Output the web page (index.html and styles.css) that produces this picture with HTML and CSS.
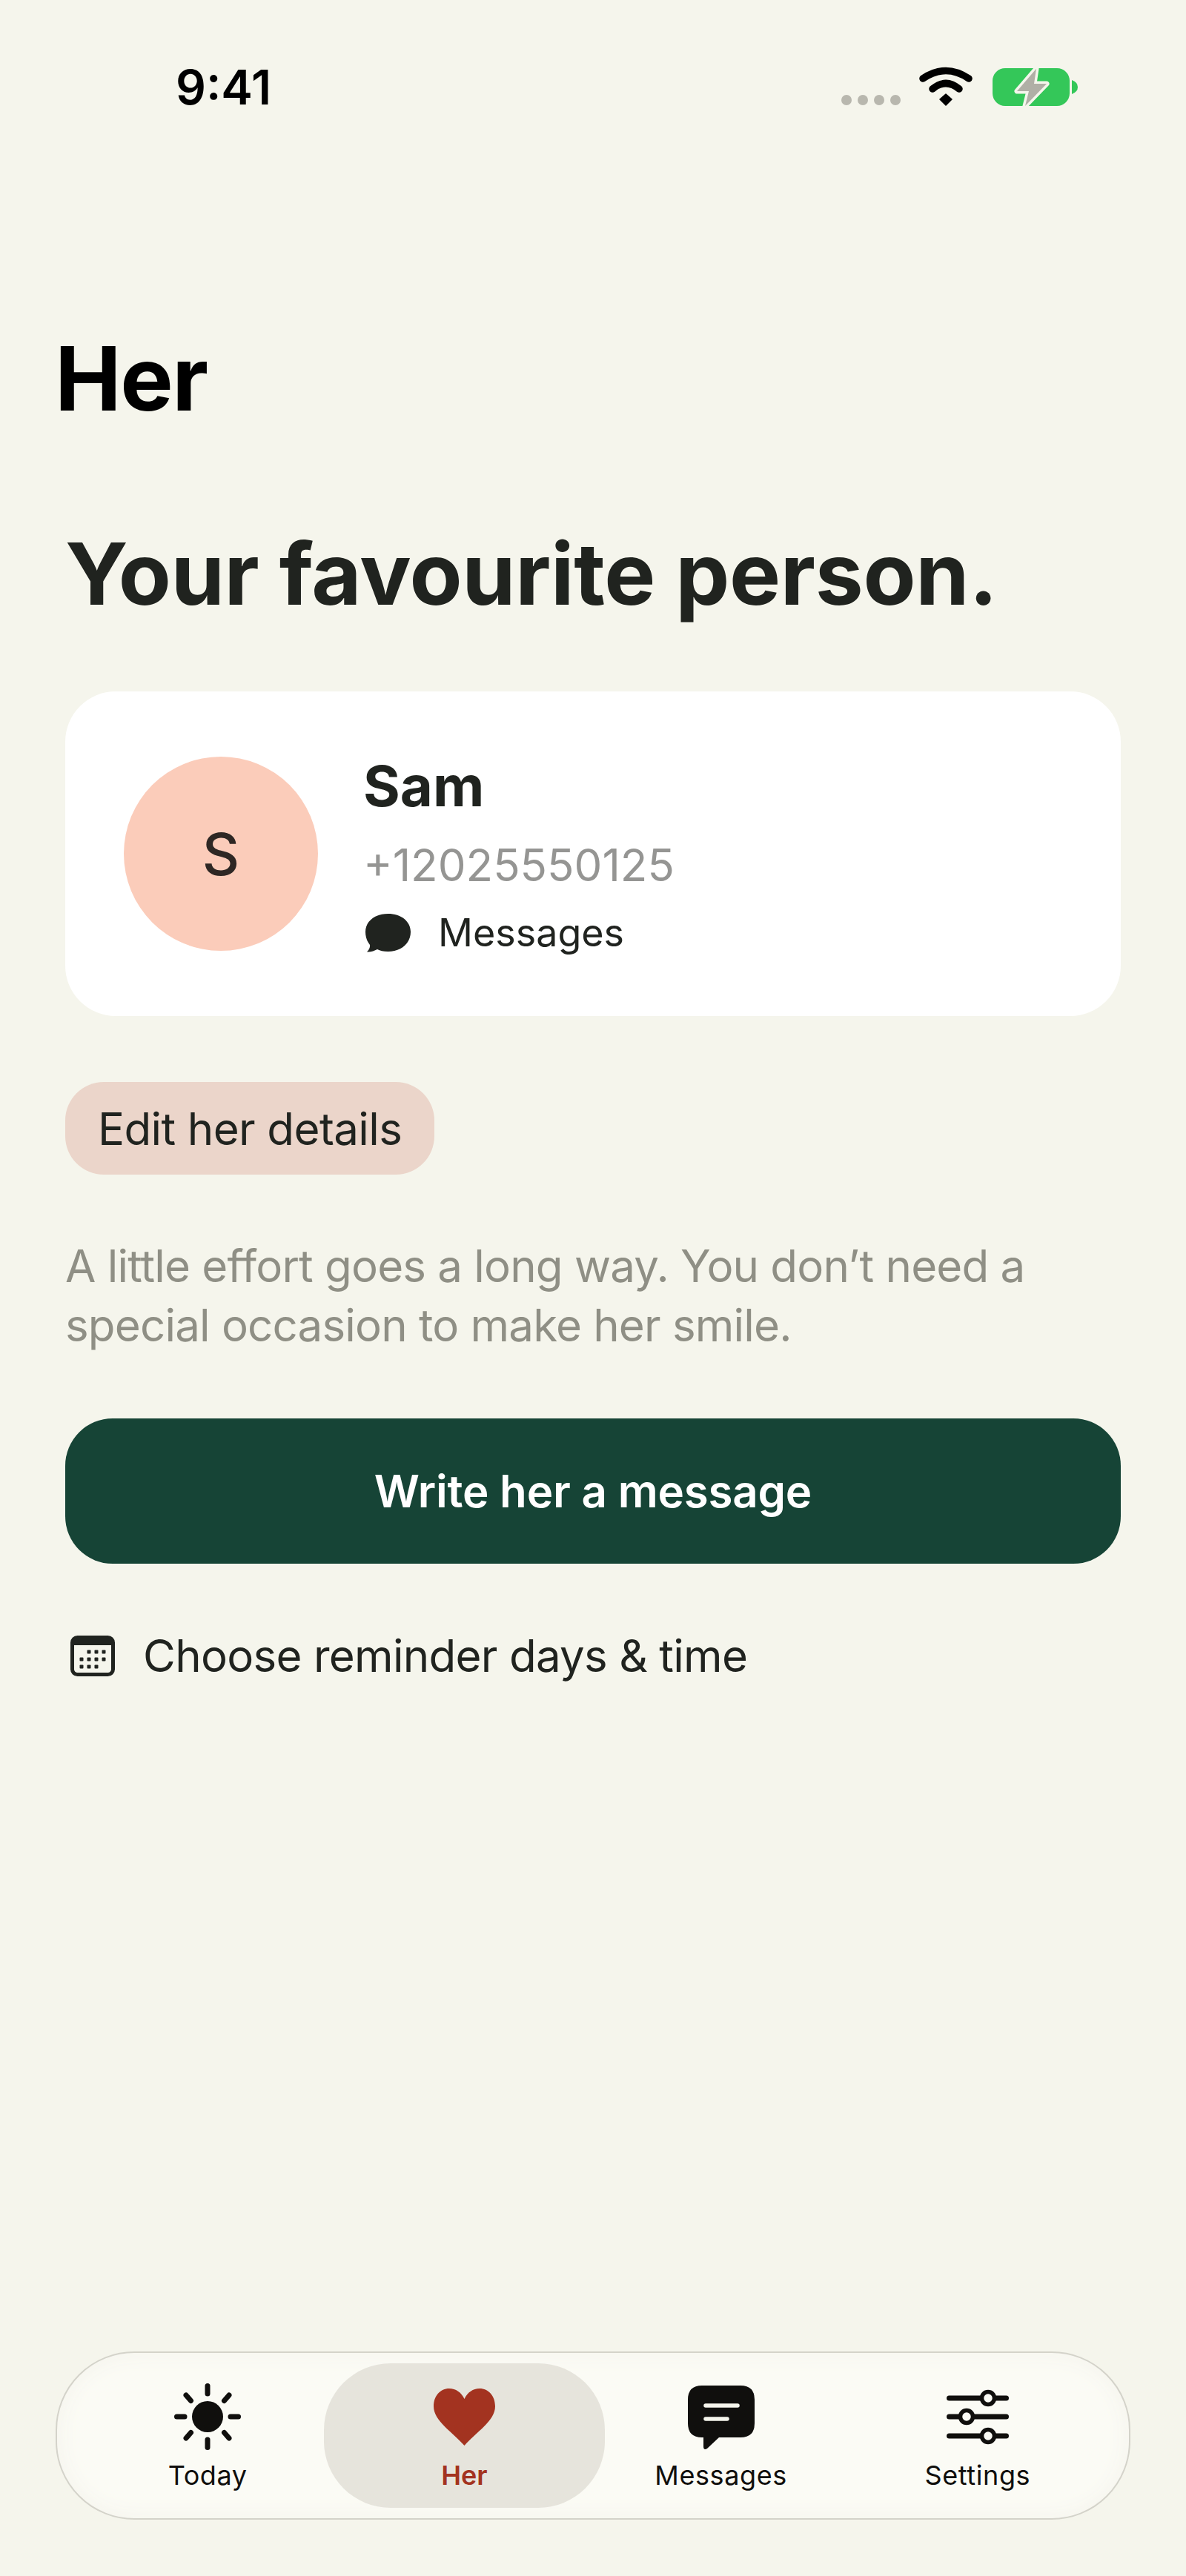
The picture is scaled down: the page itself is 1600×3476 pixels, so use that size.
FILE: index.html
```html
<!DOCTYPE html>
<html lang="en">
  <head>
    <meta charset="UTF-8" />
    <meta name="viewport" content="width=device-width, initial-scale=1.0" />
    <title>Her</title>
    <link rel="stylesheet" href="styles.css">
  </head>
  <body>
    <div class="status-bar">
      <span class="time">9:41</span>
      <svg class="status-icons" width="319" height="54" viewBox="0 0 319 54">
        <circle cx="7" cy="46" r="7" fill="#b8b7ae" />
        <circle cx="29" cy="46" r="7" fill="#b8b7ae" />
        <circle cx="51" cy="46" r="7" fill="#b8b7ae" />
        <circle cx="73" cy="46" r="7" fill="#b8b7ae" />
        <path d="M110 17 Q141 -4 172 17" fill="none" stroke="#000" stroke-width="9.5" stroke-linecap="round" />
        <path d="M123 31 Q141 16 159 31" fill="none" stroke="#000" stroke-width="9.5" stroke-linecap="round" />
        <path d="M133 45 L141 38 L149 45 L141 53 Z" stroke="#000" stroke-width="1.5" stroke-linejoin="round" />
        <rect x="204" y="3" width="104" height="51" rx="17" fill="#34c759" />
        <path d="M311 19 Q319 22 319 28.5 Q319 35 311 38 Z" fill="#34c759" />
        <path d="M263 3.7 L237 34 L253 34 L248 54 L277 24 L260 24 Z" fill="#b0afa6" stroke="#f5f5ec" stroke-width="7" stroke-linejoin="round" paint-order="stroke" />
      </svg>
    </div>

    <h1 class="page-title">Her</h1>

    <main class="content">
      <h2 class="headline">Your favourite person.</h2>

      <div class="person-card">
        <div class="avatar">S</div>
        <div class="person-info">
          <div class="person-name">Sam</div>
          <div class="person-phone">+12025550125</div>
          <div class="person-channel">
            <svg width="61" height="52" viewBox="0 0 61 52">
              <path d="M30.5 0 C48 0 61 10 61 24.5 C61 40 48 51 30.5 51 C24 51 20 50 16 48 C12 50 7 52 2 51.5 C5 48.5 6.500 45 6 42 C2 37 0 31 0 24.500 C0 10 13 0 30.500 0 Z" fill="#20231f" />
            </svg>
            <span>Messages</span>
          </div>
        </div>
      </div>

      <button class="edit-btn">Edit her details</button>

      <p class="blurb">A little effort goes a long way. You don’t need a special occasion to make her smile.</p>

      <button class="write-btn">Write her a message</button>

      <div class="reminder">
        <svg width="60" height="55" viewBox="0 0 60 55">
          <rect x="2.500" y="2.500" width="55" height="50" rx="7" fill="#f5f5ec" stroke="#20231f" stroke-width="5" />
          <path d="M2 13 V9 Q2 2 9 2 H51 Q58 2 58 9 V13 Z" fill="#20231f" />
          <g fill="#20231f">
            <rect x="22.500" y="19.500" width="5" height="5" rx="1" />
            <rect x="32.500" y="19.500" width="5" height="5" rx="1" />
            <rect x="42.500" y="19.500" width="5" height="5" rx="1" />
            <rect x="12.500" y="29.500" width="5" height="5" rx="1" />
            <rect x="22.500" y="29.500" width="5" height="5" rx="1" />
            <rect x="32.500" y="29.500" width="5" height="5" rx="1" />
            <rect x="42.500" y="29.500" width="5" height="5" rx="1" />
            <rect x="12.500" y="39.500" width="5" height="5" rx="1" />
            <rect x="22.500" y="39.500" width="5" height="5" rx="1" />
            <rect x="32.500" y="39.500" width="5" height="5" rx="1" />
          </g>
        </svg>
        <span>Choose reminder days &amp; time</span>
      </div>
    </main>

    <nav class="tab-bar">
      <div class="tab">
        <svg width="92" height="92" viewBox="0 0 92 92">
          <circle cx="46" cy="46" r="21" fill="#100f0d" />
          <g stroke="#100f0d" stroke-width="7" stroke-linecap="round">
            <path d="M46 4.500 V15" />
            <path d="M46 77 V87.500" />
            <path d="M4.500 46 H15" />
            <path d="M77 46 H87.500" />
            <path d="M17 17 L23.500 24.500" />
            <path d="M75 17 L68.500 24.500" />
            <path d="M17 75 L23.500 67.500" />
            <path d="M75 75 L68.500 67.500" />
          </g>
        </svg>
        <span>Today</span>
      </div>
      <div class="tab tab-active">
        <svg width="83" height="92" viewBox="0 -8 83 92">
          <path d="M41.500 77 C26 59 0 44 0 24 C0 10 9 0 21 0 C30 0 37 5 41.500 14 C46 5 53 0 62 0 C74 0 83 10 83 24 C83 44 57 59 41.500 77 Z" fill="#a33320" />
        </svg>
        <span>Her</span>
      </div>
      <div class="tab">
        <svg width="92" height="92" viewBox="0 0 92 92">
          <path d="M20 4 H72 Q91 4 91 23 V55 Q91 74 72 74 H43 L27 89 Q22 92 22 86 V74 H20 Q1 74 1 55 V23 Q1 4 20 4 Z" fill="#100f0d" />
          <path d="M25 31 H68" stroke="#f5f5ec" stroke-width="5.500" stroke-linecap="round" />
          <path d="M25 49 H54" stroke="#f5f5ec" stroke-width="5.500" stroke-linecap="round" />
        </svg>
        <span>Messages</span>
      </div>
      <div class="tab">
        <svg width="92" height="92" viewBox="0 0 92 92">
          <g stroke="#100f0d" stroke-width="7" stroke-linecap="round">
            <path d="M7.500 21 H84.500" />
            <path d="M7.500 46 H84.500" />
            <path d="M7.500 72 H84.500" />
          </g>
          <g fill="#fbfbf5" stroke="#100f0d" stroke-width="5.500">
            <circle cx="60" cy="21" r="8.500" />
            <circle cx="31" cy="46" r="8.500" />
            <circle cx="60" cy="72" r="8.500" />
          </g>
        </svg>
        <span>Settings</span>
      </div>
    </nav>
  </body>
</html>
```

FILE: styles.css
```css
* {
  box-sizing: border-box;
}
body {
  margin: 0;
  min-height: 3476px;
  display: flex;
  flex-direction: column;
  background-color: #f5f5ec;
  font-family: Inter, "Liberation Sans", sans-serif;
  color: #20231f;
}
.status-bar {
  display: flex;
  justify-content: space-between;
  align-items: flex-start;
  padding: 89px 146px 0 237px;
}
.time {
  font-size: 64px;
  font-weight: 600;
  line-height: 58px;
  color: #000;
}
.status-icons {
  display: block;
}
.page-title {
  margin: 294px 0 0 74px;
  font-size: 120px;
  font-weight: 700;
  line-height: 140px;
  letter-spacing: -1.5px;
  color: #000;
}
.content {
  padding: 0 88px;
  display: flex;
  flex-direction: column;
  align-items: flex-start;
}
.headline {
  margin: 123px 0 0;
  font-size: 116px;
  font-weight: 700;
  line-height: 140px;
  letter-spacing: -0.3px;
}
.person-card {
  margin-top: 89px;
  width: 100%;
  height: 438px;
  padding: 0 79px;
  display: flex;
  align-items: center;
  gap: 61px;
  background-color: #fff;
  border-radius: 68px;
}
.avatar {
  width: 262px;
  height: 262px;
  border-radius: 50%;
  background-color: #fbccba;
  display: flex;
  align-items: center;
  justify-content: center;
  font-size: 78px;
  font-weight: 500;
  color: #2e2724;
}
.person-info {
  display: flex;
  flex-direction: column;
}
.person-name {
  font-size: 76px;
  font-weight: 700;
  line-height: 92px;
}
.person-phone {
  margin-top: 25px;
  font-size: 60px;
  line-height: 72px;
  color: #959593;
}
.person-channel {
  margin-top: 25px;
  display: flex;
  align-items: center;
  gap: 37px;
  font-size: 52px;
  line-height: 62px;
}
.person-channel svg {
  display: block;
  margin-left: 3px;
}
.edit-btn {
  margin-top: 89px;
  height: 125px;
  padding: 0 44px;
  border: none;
  border-radius: 52px;
  background-color: #ebd5ca;
  font-family: inherit;
  font-size: 60px;
  letter-spacing: -0.6px;
  color: #20231f;
}
.blurb {
  margin: 83px 0 0;
  font-size: 60px;
  line-height: 80px;
  letter-spacing: -0.8px;
  color: #8f8f85;
}
.write-btn {
  margin-top: 86px;
  width: 100%;
  height: 196px;
  border: none;
  border-radius: 64px;
  background-color: #164436;
  font-family: inherit;
  font-size: 60px;
  font-weight: 600;
  letter-spacing: -0.2px;
  color: #fff;
}
.reminder {
  margin: 88px 0 0 7px;
  display: flex;
  align-items: center;
  gap: 38px;
  font-size: 60px;
  line-height: 72px;
  letter-spacing: -0.7px;
}
.reminder svg {
  display: block;
}
.tab-bar {
  margin: auto 75px 76px;
  height: 227px;
  padding: 14px 31px 14px 30px;
  display: grid;
  grid-template-columns: repeat(4, 1fr);
  background-color: #fbfbf5;
  border: 2px solid #d4d3ca;
  border-radius: 106px;
  box-shadow: inset 0 0 30px #f4f3ec;
}
.tab {
  position: relative;
  display: flex;
  flex-direction: column;
  align-items: center;
  padding-top: 26px;
  font-size: 36px;
  font-weight: 400;
  line-height: 46px;
  letter-spacing: 0.6px;
  color: #100f0d;
}
.tab svg {
  position: relative;
  display: block;
  margin-bottom: 10px;
}
.tab span {
  position: relative;
}
.tab-active {
  font-weight: 600;
  letter-spacing: 0;
  color: #a33320;
}
.tab-active::before {
  content: "";
  position: absolute;
  top: 0;
  bottom: 0;
  left: -16px;
  right: -16px;
  background-color: #e6e4dc;
  border-radius: 90px;
}
```
